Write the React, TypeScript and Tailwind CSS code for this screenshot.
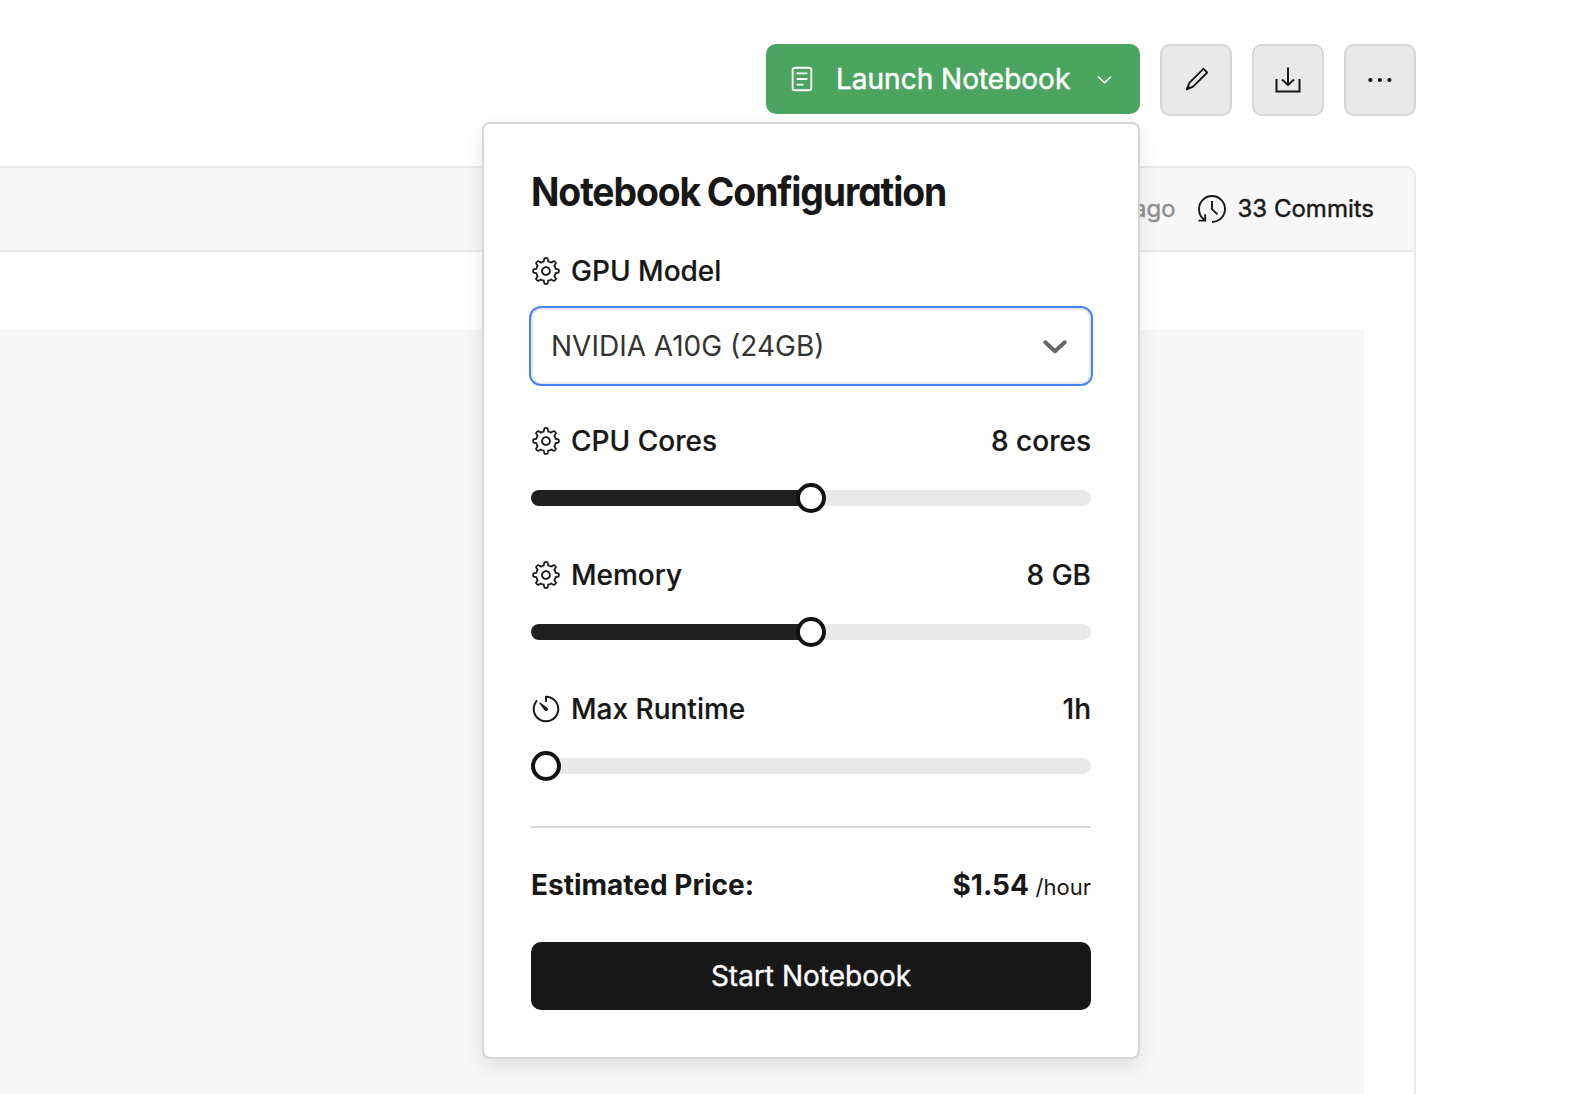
import type { ReactNode } from "react";
import { RxChevronDown, RxGear, RxPencil1, RxReader, RxTimer } from "react-icons/rx";

function DownloadIcon() {
  return (
    <svg width="28" height="28" viewBox="0 0 28 28" fill="none" stroke="currentColor" strokeWidth="2">
      <path d="M2.5 13V25.5H25.5V13" />
      <path d="M14 1.5V19M8 13.5 14 19 20 13.5" />
    </svg>
  );
}

function DotsIcon() {
  return (
    <svg width="28" height="28" viewBox="0 0 28 28" fill="currentColor">
      <circle cx="4.4" cy="14" r="2.1" />
      <circle cx="13.9" cy="14" r="2.1" />
      <circle cx="23.4" cy="14" r="2.1" />
    </svg>
  );
}

function HistoryIcon() {
  return (
    <svg width="30" height="30" viewBox="0 0 30 30" fill="none" stroke="currentColor" strokeWidth="1.9">
      <path d="M15 28A13 13 0 1 0 2 15C2 19.5 4 23.5 7.5 26" />
      <path d="M1.5 26.6H8.2V20.2" />
      <path d="M15 7V15.2L20.4 20.4" />
    </svg>
  );
}

function IconButton({ children }: { children: ReactNode }) {
  return (
    <button className="flex size-[72px] items-center justify-center rounded-[10px] border-2 border-[#d6d6d6] bg-[#e9e9e9]">
      {children}
    </button>
  );
}

function Label({ icon, children }: { icon: ReactNode; children: ReactNode }) {
  return (
    <div className="flex items-center gap-[10px]">
      {icon}
      <span>{children}</span>
    </div>
  );
}

type SliderProps = { icon: ReactNode; label: string; value: string; percent: number };

function SliderField({ icon, label, value, percent }: SliderProps) {
  return (
    <div className="flex flex-col gap-[25px]">
      <div className="flex items-center justify-between font-medium [-webkit-text-stroke:0.2px]">
        <Label icon={icon}>{label}</Label>
        <span>{value}</span>
      </div>
      <div className="relative flex h-[30px] items-center">
        <div className="h-4 w-full overflow-hidden rounded-full bg-[#e9e9e9]">
          <div className="h-full bg-[#202020]" style={{ width: `${percent}%` }} />
        </div>
        <div
          className="absolute top-0 size-[30px] rounded-full border-4 border-[#121212] bg-white"
          style={{ left: `calc((100% - 30px) * ${percent / 100})` }}
        />
      </div>
    </div>
  );
}

function ConfigPopover() {
  return (
    <div className="absolute top-[78px] right-0 w-[658px] rounded-lg border-2 border-[#d6d6d6] bg-white px-[47px] pt-[44px] pb-[47px] text-[28px] leading-[34px] shadow-[0_8px_20px_rgba(0,0,0,0.1)]">
      <h2 className="origin-left scale-x-[0.934] text-[40px] leading-[48px] font-bold tracking-[-1.2px] [word-spacing:-1px] whitespace-nowrap [font-feature-settings:'cv11']">
        Notebook Configuration
      </h2>
      <div className="mt-[38px] font-medium [-webkit-text-stroke:0.2px]">
        <Label icon={<RxGear size={30} />}>GPU Model</Label>
      </div>
      <div className="mt-5 flex h-[76px] items-center justify-between rounded-[10px] border-2 border-[#e9e9e9] pr-[22px] pl-[18px] text-[#333] outline-2 outline-[#4583f5]">
        <span>NVIDIA A10G (24GB)</span>
        <svg width="24" height="18" viewBox="0 0 24 18" fill="none" stroke="#666" strokeWidth="4" strokeLinecap="round" strokeLinejoin="round">
          <path d="M2.3 5.3 12 14.3 21.7 5.3" />
        </svg>
      </div>
      <div className="mt-10 flex flex-col gap-[45px]">
        <SliderField icon={<RxGear size={30} />} label="CPU Cores" value="8 cores" percent={50} />
        <SliderField icon={<RxGear size={30} />} label="Memory" value="8 GB" percent={50} />
        <SliderField icon={<RxTimer size={30} />} label="Max Runtime" value="1h" percent={0} />
      </div>
      <div className="mt-[45px] border-t-2 border-[#d6d6d6]" />
      <div className="mt-10 flex h-[34px] items-baseline justify-between font-bold">
        <span>Estimated Price:</span>
        <span>
          $1.54 <span className="text-[22px] font-normal">/hour</span>
        </span>
      </div>
      <button className="mt-10 flex h-[68px] w-full items-center justify-center rounded-[10px] bg-[#171717] text-white [-webkit-text-stroke:0.4px]">
        Start Notebook
      </button>
    </div>
  );
}

export default function App() {
  return (
    <div className="flex h-[1094px] w-full flex-col overflow-hidden bg-white font-['Inter',sans-serif] text-[#171717] [font-variation-settings:'opsz'_14]">
      <header className="z-10 flex items-start justify-end gap-5 pt-11 pr-[166px]">
        <div className="relative">
          <button className="flex h-[70px] w-[374px] items-center rounded-[10px] bg-[#4ca461] pl-[22px] text-[28px] text-white">
            <RxReader size={28} />
            <span className="ml-5 whitespace-nowrap [-webkit-text-stroke:0.5px]">Launch Notebook</span>
            <RxChevronDown size={23} className="mb-0.5 ml-[23px]" />
          </button>
          <ConfigPopover />
        </div>
        <IconButton>
          <RxPencil1 size={28} />
        </IconButton>
        <IconButton>
          <DownloadIcon />
        </IconButton>
        <IconButton>
          <DotsIcon />
        </IconButton>
      </header>
      <main className="mt-[50px] mr-[166px] flex grow flex-col rounded-tr-[10px] border-t-2 border-r-2 border-[#e9e9e9]">
        <div className="flex h-[84px] shrink-0 items-center justify-end rounded-tr-lg border-b-2 border-[#e9e9e9] bg-[#f7f7f7] pr-10 text-2xl leading-7 [-webkit-text-stroke:0.4px]">
          <span className="text-[#8f8f8f]">ago</span>
          <span className="ml-[21px]">
            <HistoryIcon />
          </span>
          <span className="ml-[11px]">33 Commits</span>
        </div>
        <div className="mt-[78px] mr-[50px] grow bg-[#f7f7f7]" />
      </main>
    </div>
  );
}
